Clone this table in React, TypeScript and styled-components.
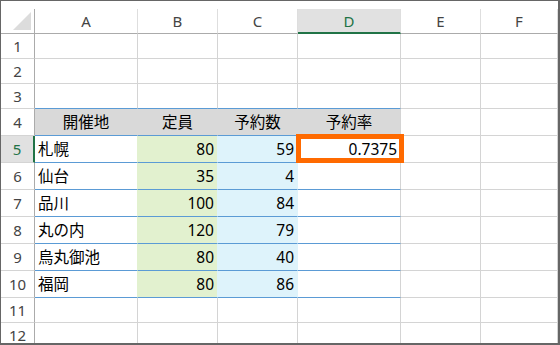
import React from 'react';
import styled, { createGlobalStyle } from 'styled-components';

const GRID = '#d4d4d4';
const HEAD_LINE = '#ababab';
const HEAD_SEP = '#dedede';
const TABLE_LINE = '#5b9bd5';
const HEAD_FILL = '#d9d9d9';
const GREEN_FILL = '#e2f1cf';
const BLUE_FILL = '#def3fb';
const SELECT_FILL = '#e1e1e1';
const EXCEL_GREEN = '#217346';

const GlobalStyle = createGlobalStyle`
  html, body {
    margin: 0;
    padding: 0;
    background: #ffffff;
  }
  body {
    font-family: "Noto Sans", "Noto Sans CJK JP", sans-serif;
  }
`;

const Frame = styled.div`
  width: 560px;
  height: 345px;
  box-sizing: border-box;
  border-style: solid;
  border-color: #666666;
  border-width: 1px 2px 2px 1px;
  overflow: hidden;
  background: #ffffff;
  padding-top: 8px;
`;

const Sheet = styled.div`
  display: grid;
  grid-template-columns: 34px 103px 80px 80px 103px 80px 1fr;
  grid-template-rows: 25px repeat(3, 25px) repeat(7, 27px) repeat(2, 25px);
`;

const Corner = styled.div`
  box-sizing: border-box;
  border-right: 1px solid ${HEAD_LINE};
  border-bottom: 1px solid ${HEAD_LINE};
  display: flex;
  align-items: flex-end;
  justify-content: flex-end;
  padding: 0 2px 2px 0;
`;

const ColHead = styled.div<{ $active?: boolean }>`
  box-sizing: border-box;
  display: flex;
  align-items: center;
  justify-content: center;
  font-size: 15px;
  color: ${(p) => (p.$active ? EXCEL_GREEN : '#444444')};
  background: ${(p) => (p.$active ? SELECT_FILL : '#ffffff')};
  border-right: 1px solid ${HEAD_SEP};
  border-bottom: ${(p) => (p.$active ? `2px solid ${EXCEL_GREEN}` : `1px solid ${HEAD_LINE}`)};
`;

const RowHead = styled.div<{ $active?: boolean }>`
  box-sizing: border-box;
  display: flex;
  align-items: center;
  justify-content: center;
  font-size: 15px;
  color: ${(p) => (p.$active ? EXCEL_GREEN : '#444444')};
  background: ${(p) => (p.$active ? SELECT_FILL : '#ffffff')};
  border-right: ${(p) => (p.$active ? `2px solid ${EXCEL_GREEN}` : `1px solid ${HEAD_LINE}`)};
  border-bottom: 1px solid ${GRID};
`;

const Cell = styled.div<{
  $fill?: string;
  $align?: 'left' | 'right' | 'center';
  $right?: string;
  $bottom?: string;
}>`
  position: relative;
  box-sizing: border-box;
  display: flex;
  align-items: center;
  justify-content: ${(p) =>
    p.$align === 'right' ? 'flex-end' : p.$align === 'center' ? 'center' : 'flex-start'};
  padding: 0 3px 1px 3px;
  font-size: 15.5px;
  color: #000000;
  white-space: nowrap;
  background: ${(p) => p.$fill || '#ffffff'};
  border-right: 1px solid ${(p) => p.$right || GRID};
  border-bottom: 1px solid ${(p) => p.$bottom || GRID};
`;

const Selection = styled.div`
  position: absolute;
  left: -2px;
  top: -2px;
  width: 108px;
  height: 29px;
  box-sizing: border-box;
  border: 5px solid #ff6a00;
  z-index: 2;
  pointer-events: none;
`;

const columns = ['A', 'B', 'C', 'D', 'E', 'F'];

type Row = [string, number, number, string?];

const header = ['開催地', '定員', '予約数', '予約率'];

const data: Row[] = [
  ['札幌', 80, 59, '0.7375'],
  ['仙台', 35, 4],
  ['品川', 100, 84],
  ['丸の内', 120, 79],
  ['烏丸御池', 80, 40],
  ['福岡', 80, 86],
];

const EmptyCells = ({ from, bottom }: { from: number; bottom?: string }) => (
  <>
    {columns.slice(from).map((c, i) => (
      <Cell key={c} $bottom={bottom && from + i < 4 ? bottom : undefined} />
    ))}
  </>
);

export default function App() {
  const rowNums = Array.from({ length: 12 }, (_, i) => i + 1);

  return (
    <>
      <GlobalStyle />
      <Frame>
        <Sheet>
          <Corner>
            <svg width="19" height="19" viewBox="0 0 19 19">
              <polygon points="18,0 18,18 0,18" fill="#dcdcdc" />
            </svg>
          </Corner>
          {columns.map((c) => (
            <ColHead key={c} $active={c === 'D'}>
              {c}
            </ColHead>
          ))}

          {rowNums.map((n) => {
            const rowHead = (
              <RowHead key={`h${n}`} $active={n === 5}>
                {n}
              </RowHead>
            );

            if (n <= 3) {
              return (
                <React.Fragment key={n}>
                  {rowHead}
                  <EmptyCells from={0} bottom={n === 3 ? TABLE_LINE : undefined} />
                </React.Fragment>
              );
            }

            if (n === 4) {
              return (
                <React.Fragment key={n}>
                  {rowHead}
                  {header.map((h, i) => (
                    <Cell
                      key={h}
                      $align="center"
                      $fill={HEAD_FILL}
                      $right={i < 3 ? HEAD_FILL : GRID}
                      $bottom={TABLE_LINE}
                    >
                      {h}
                    </Cell>
                  ))}
                  <EmptyCells from={4} />
                </React.Fragment>
              );
            }

            if (n <= 10) {
              const [place, cap, booked, rate] = data[n - 5];
              return (
                <React.Fragment key={n}>
                  {rowHead}
                  <Cell $right={GREEN_FILL} $bottom={TABLE_LINE}>
                    {place}
                  </Cell>
                  <Cell $align="right" $fill={GREEN_FILL} $right={BLUE_FILL} $bottom={TABLE_LINE}>
                    {cap}
                  </Cell>
                  <Cell $align="right" $fill={BLUE_FILL} $right={BLUE_FILL} $bottom={TABLE_LINE}>
                    {booked}
                  </Cell>
                  <Cell $align="right" $bottom={TABLE_LINE}>
                    {rate}
                    {n === 5 && <Selection />}
                  </Cell>
                  <EmptyCells from={4} />
                </React.Fragment>
              );
            }

            return (
              <React.Fragment key={n}>
                {rowHead}
                <EmptyCells from={0} />
              </React.Fragment>
            );
          })}
        </Sheet>
      </Frame>
    </>
  );
}
